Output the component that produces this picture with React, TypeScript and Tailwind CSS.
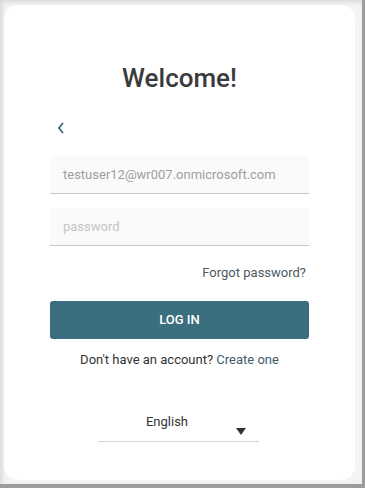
import React from "react";

export default function App() {
  return (
    <div className="w-[365px] h-[488px] bg-[#9c9c9c] overflow-hidden" style={{ fontFamily: "Roboto, 'Liberation Sans', sans-serif" }}>
      <div className="w-[362px] h-[484px] bg-[#f3f4f6] pt-[5px] pl-[4px] shadow-[inset_2px_2px_5px_rgba(0,0,0,0.12)]">
        <div className="w-[351px] h-[475px] rounded-[14px] bg-white flex flex-col items-center">
          <h1 className="mt-[56px] text-[26px] leading-[34px] font-medium text-[#3b3b3b]">Welcome!</h1>
          <div className="w-[259px] mt-[21px] flex flex-col">
            <button className="self-start ml-[6px] h-[24px] flex items-center">
              <svg width="10" height="14" viewBox="0 0 10 14">
                <path d="M7 2 L3 7 L7 12" fill="none" stroke="#3a6f80" strokeWidth="1.8" />
              </svg>
            </button>
            <div className="mt-[16px] h-[38px] bg-[#fafafa] border-b border-[#c6c6c6] flex items-center px-[13px] text-[13px] text-[#9e9e9e]">
              testuser12@wr007.onmicrosoft.com
            </div>
            <div className="mt-[14px] h-[38px] bg-[#fafafa] border-b border-[#c6c6c6] flex items-center px-[13px] text-[13px] text-[#c4c4c4]">
              password
            </div>
            <div className="mt-[18px] text-right pr-[3px] text-[13px] leading-[18px] text-[#4d5a62]">Forgot password?</div>
            <button className="mt-[19px] h-[38px] rounded-[3px] bg-[#3b6f80] text-white text-[13px] font-medium">LOG IN</button>
            <div className="mt-[12px] text-center text-[13px] leading-[18px] text-[#333]">
              Don't have an account? <span className="text-[#3d5c69]">Create one</span>
            </div>
          </div>
          <div className="mt-[41px] w-[161px] ml-[-3px] h-[32px] border-b border-[#d4d4d4] relative">
            <div className="pt-[3px] text-center pr-[22px] text-[13px] leading-[18px] text-[#333]">English</div>
            <span className="absolute right-[13px] top-[18px] w-0 h-0 border-l-[5px] border-r-[5px] border-t-[7px] border-l-transparent border-r-transparent border-t-[#333]"></span>
          </div>
        </div>
      </div>
    </div>
  );
}
